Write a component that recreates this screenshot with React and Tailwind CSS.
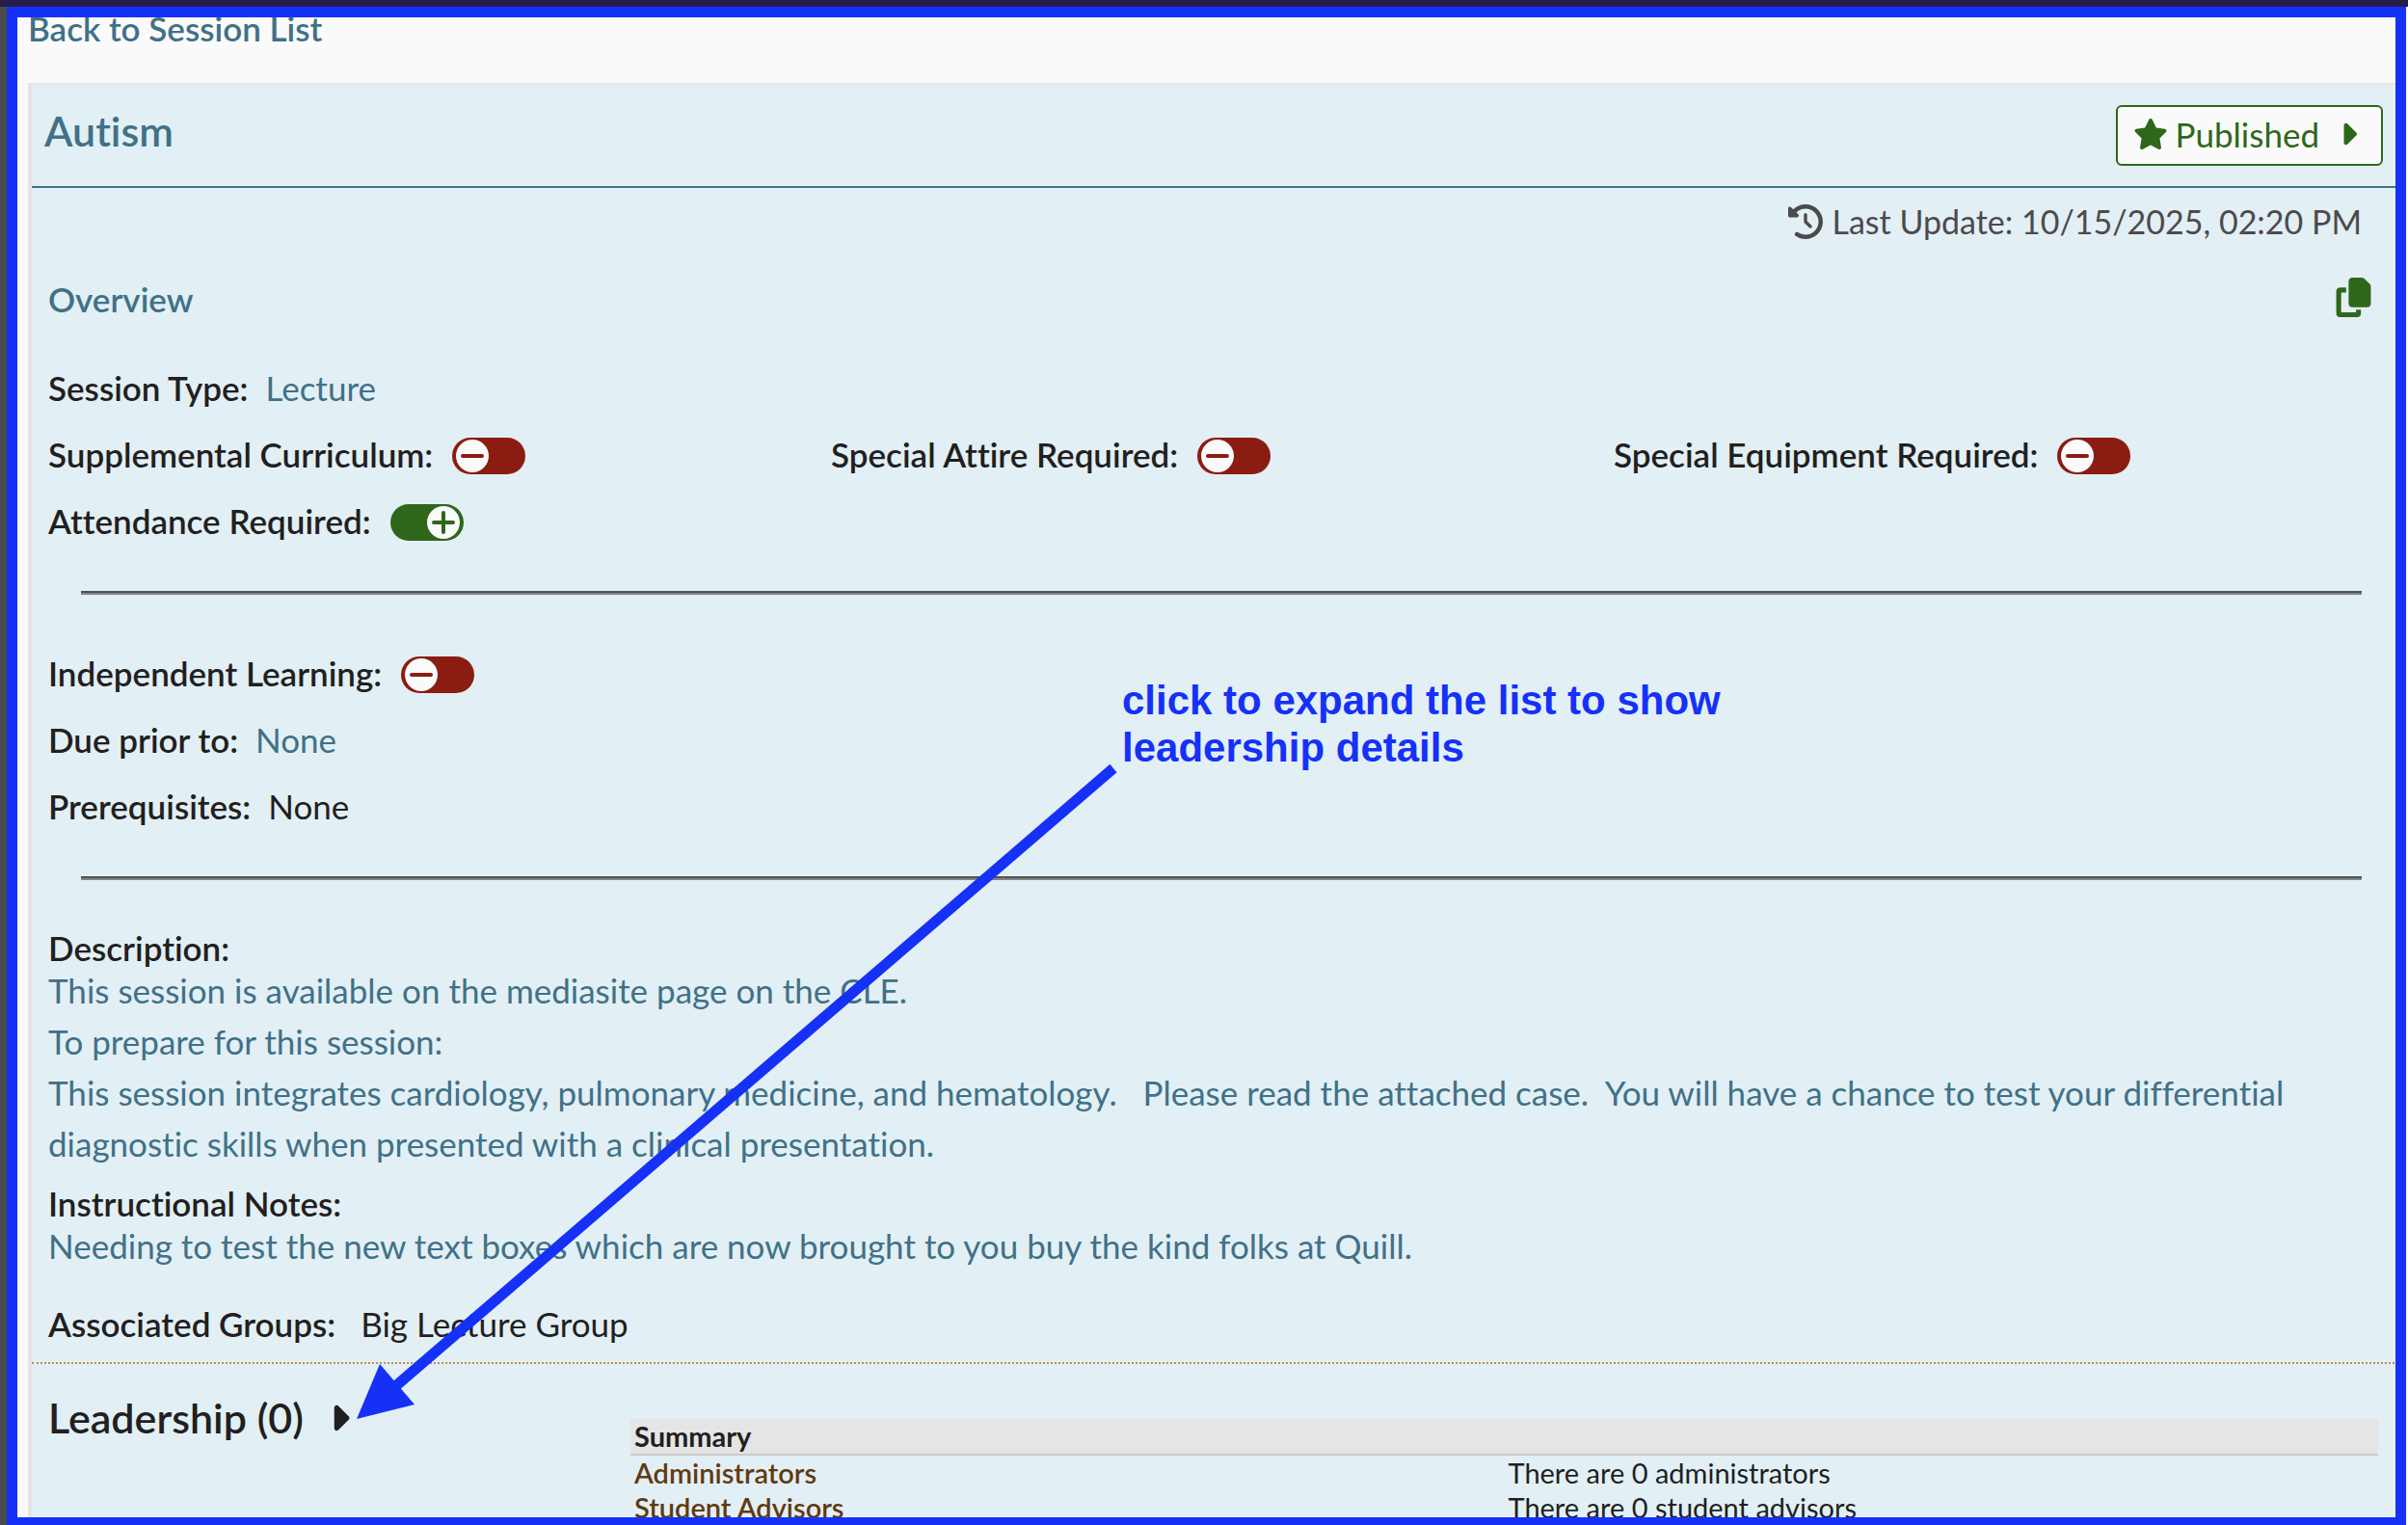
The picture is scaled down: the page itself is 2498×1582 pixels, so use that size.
import React, { useState } from "react";
import { FaStar, FaCaretRight, FaClockRotateLeft, FaCopy } from "react-icons/fa6";

function Toggle({ id, label, on = false }) {
  const [checked, setChecked] = useState(on);
  return (
    <div className="flex h-[69px] items-center gap-5">
      <label htmlFor={id} className="font-semibold">{label}</label>
      <span className="relative mt-1 flex">
        <input
          id={id}
          type="checkbox"
          role="switch"
          checked={checked}
          onChange={() => setChecked(!checked)}
          className="h-[38px] w-[76px] cursor-pointer appearance-none rounded-full bg-[#8b1c12] checked:bg-[#2f671a]"
        />
        <svg
          viewBox="0 0 34 34"
          aria-hidden="true"
          className={
            checked
              ? "pointer-events-none absolute top-0.5 right-1 size-[34px] text-[#2f671a]"
              : "pointer-events-none absolute top-0.5 left-1 size-[34px] text-[#8b1c12]"
          }
        >
          <circle cx="17" cy="17" r="17" fill="#fafafa" />
          <path
            d={checked ? "M7 17H27M17 7V27" : "M7 17H27"}
            stroke="currentColor"
            strokeWidth="4"
            strokeLinecap="round"
          />
        </svg>
      </span>
    </div>
  );
}

function Field({ label, children }) {
  return (
    <div className="flex h-[69px] items-center gap-[18px]">
      <span className="font-semibold">{label}</span>
      {children}
    </div>
  );
}

function Divider() {
  return <hr className="mt-[39px] mr-[46px] mb-[46px] ml-[34px] border-t-2 border-b-2 border-t-[#4e5353] border-b-[#848484]" />;
}

function Annotation() {
  return (
    <>
      <div className="pointer-events-none absolute top-[7px] right-0.5 bottom-0 left-[7px] border-[11px] border-b-8 border-[#1531f8]" />
      <svg
        viewBox="0 0 800 690"
        aria-hidden="true"
        className="pointer-events-none absolute top-[790px] left-[365px] h-[690px] w-[800px] text-[#1531f8]"
      >
        <path d="M790 7L36 656" stroke="currentColor" strokeWidth="11" />
        <path d="M5 682L29 625L65 667Z" fill="currentColor" />
      </svg>
      <p className="pointer-events-none absolute top-[702px] left-[1164px] w-[680px] font-['Liberation_Sans',sans-serif] text-[42px] leading-[49px] font-bold text-[#1531f8]">
        click to expand the list to show leadership details
      </p>
    </>
  );
}

const summary = [
  ["Administrators", "There are 0 administrators"],
  ["Student Advisors", "There are 0 student advisors"],
];

export default function App() {
  return (
    <div className="relative flex h-screen flex-col overflow-hidden bg-[#fafafa] font-[Lato,sans-serif] text-[35px] leading-[44px] text-[#221f20] [font-variant-ligatures:none]">
      <div className="h-[7px] shrink-0 bg-[#261d4a]" />
      <div className="flex min-h-0 grow border-l-[7px] border-[#4b4b4b]">
        <main className="grow pr-0.5 pl-[22px]">
          <a href="#sessions" className="block font-semibold text-[#407187]">Back to Session List</a>

          <section className="mt-[35px] border-t-2 border-l-4 border-[#e5e5e5] bg-[#e2eff5]">
            <header className="flex h-[107px] items-center justify-between border-b-2 border-[#407187] pr-6 pl-[13px]">
              <h1 className="pb-[10px] text-[43px] leading-[52px] font-semibold text-[#407187]">Autism</h1>
              <button className="flex h-[63px] items-center gap-2 rounded-md border-2 border-[#2f671a] bg-[#fafafa] px-4 text-[#2f671a]">
                <FaStar className="mb-1 size-9" />
                <span className="pb-1">Published</span>
                <FaCaretRight className="mb-1 ml-1 size-9" />
              </button>
            </header>

            <div className="pt-[11px] pl-[17px]">
              <p className="flex items-center justify-end gap-[10px] pr-[46px] text-[34px] leading-[48px] text-[#4c4a4a]">
                <FaClockRotateLeft className="size-9" />
                Last Update: 10/15/2025, 02:20 PM
              </p>
              <div className="mt-8 mb-[33px] flex items-center justify-between pr-9">
                <h2 className="leading-[48px] font-semibold text-[#407187]">Overview</h2>
                <button aria-label="Copy session" className="pb-1 text-[#2f671a]">
                  <FaCopy className="h-[41px] w-[37px]" />
                </button>
              </div>

              <Field label="Session Type:">
                <button className="text-[#407187]">Lecture</button>
              </Field>
              <div className="grid grid-cols-3 pr-[10px]">
                <Toggle id="supplemental" label="Supplemental Curriculum:" />
                <Toggle id="attire" label="Special Attire Required:" />
                <Toggle id="equipment" label="Special Equipment Required:" />
                <Toggle id="attendance" label="Attendance Required:" on />
              </div>
              <Divider />

              <Toggle id="independent" label="Independent Learning:" />
              <Field label="Due prior to:">
                <button className="text-[#407187]">None</button>
              </Field>
              <Field label="Prerequisites:">
                <span>None</span>
              </Field>
              <Divider />

              <h3 className="mt-[52px] leading-9 font-semibold">Description:</h3>
              <div className="pr-16 leading-[53px] text-[#407187]">
                <p>This session is available on the mediasite page on the CLE.</p>
                <p>To prepare for this session:</p>
                <p>
                  This session integrates cardiology, pulmonary medicine, and hematology.&nbsp;&nbsp; Please read the
                  attached case.&nbsp; You will have a chance to test your differential diagnostic skills when presented
                  with a clinical presentation.
                </p>
              </div>
              <h3 className="mt-[17px] leading-9 font-semibold">Instructional Notes:</h3>
              <p className="leading-[53px] text-[#407187]">
                Needing to test the new text boxes which are now brought to you buy the kind folks at Quill.
              </p>
              <p className="mt-[32px] mb-[18px]">
                <span className="mr-[26px] font-semibold">Associated Groups:</span>
                <span>Big Lecture Group</span>
              </p>
            </div>

            <div className="flex border-t-2 border-dotted border-[#cb8a42] pl-[17px]">
              <div className="w-[604px] shrink-0 pt-[30px]">
                <button className="flex items-center gap-4 text-[43px] leading-[52px] font-semibold">
                  Leadership (0)
                  <FaCaretRight className="size-[42px]" />
                </button>
              </div>
              <table className="mt-[57px] mr-[29px] grow table-fixed text-left text-[29px] leading-9">
                <thead>
                  <tr className="border-b-2 border-[#cacaca] bg-[#e5e5e5]">
                    <th colSpan={2} className="px-1 font-bold">Summary</th>
                  </tr>
                </thead>
                <tbody>
                  {summary.map(([name, text]) => (
                    <tr key={name}>
                      <th scope="row" className="w-1/2 px-1 font-semibold text-[#5f3a10]">{name}</th>
                      <td className="px-1">{text}</td>
                    </tr>
                  ))}
                </tbody>
              </table>
            </div>
          </section>
        </main>
      </div>
      <Annotation />
    </div>
  );
}
